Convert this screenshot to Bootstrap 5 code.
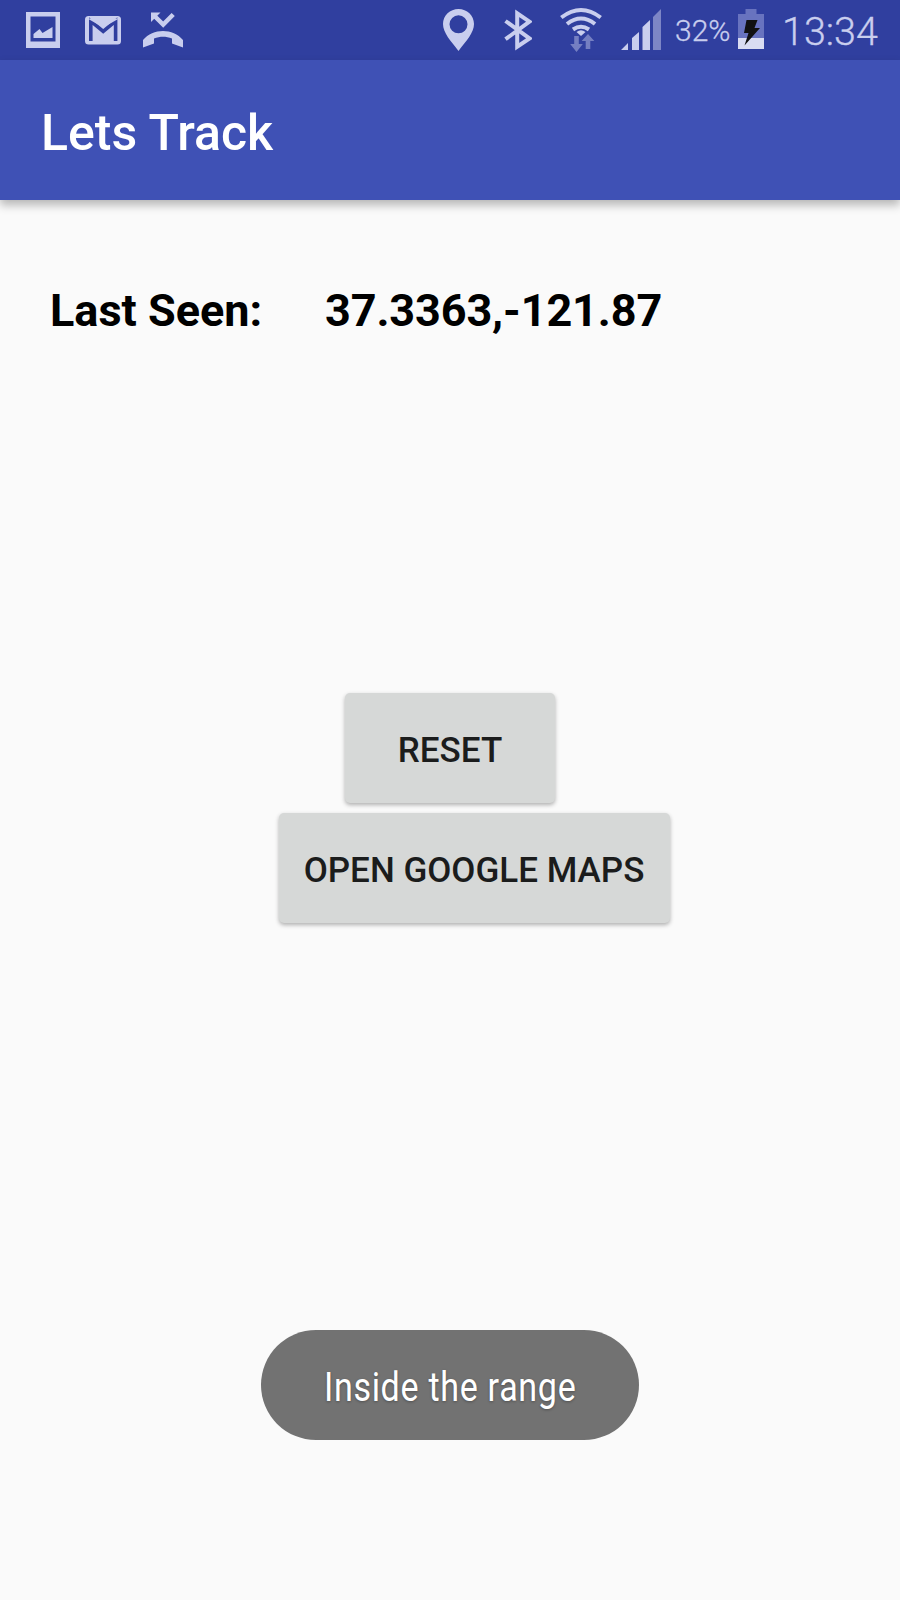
<!DOCTYPE html>
<html lang="en">
<head>
<meta charset="utf-8">
<meta name="viewport" content="width=device-width, initial-scale=1">
<title>Lets Track</title>
<link href="https://cdn.jsdelivr.net/npm/bootstrap@5.3.0/dist/css/bootstrap.min.css" rel="stylesheet">
<style>
body { font-family: Roboto, "Liberation Sans", sans-serif; background: #fafafa; color: #000; }
.screen { width: 900px; height: 1600px; overflow: hidden; }
.status { height: 60px; background: #303f9f; color: #c9ceee; font-weight: 300; line-height: 60px; white-space: nowrap; -webkit-text-stroke: .3px #c9ceee; }
.status svg { height: 60px; fill: #c9ceee; flex: none; }
.status-left { padding-left: 26px; }
.pct { font-size: 30px; width: 55px; margin-left: 14px; line-height: 62px; }
.clock { font-size: 39.5px; width: 94px; margin: 0 24px 0 18px; line-height: 64px; }
.appbar { height: 140px; padding: 5px 41px 0; background: #3f51b5; box-shadow: 0 5px 9px rgba(0,0,0,.28); z-index: 1; }
.appbar .navbar-brand { font-size: 50px; font-weight: 500; line-height: 1; color: #fff; }
.seen { padding: 284px 0 0 50px; margin-top: -200px; font-size: 45px; font-weight: 700; line-height: 53px; }
.seen dt { width: 275px; font-weight: 700; }
.seen dd { font-weight: 700; letter-spacing: -.12px; }
.key { height: 110px; background: #d6d8d7; border: 0; border-radius: 5px; color: #1b1c1c; font-size: 35px; font-weight: 500; line-height: 1; padding: 5px 0 0; box-shadow: 0 2px 4px rgba(0,0,0,.3); white-space: nowrap; }
.actions { margin-top: 356px; gap: 10px; }
.reset { width: 210px; margin-left: 345px; }
.maps { width: 391px; margin-left: 278.5px; }
.msg { width: 378px; height: 110px; margin-top: 407px; border-radius: 55px; background: #727272; color: #fff; font-size: 40px; line-height: 1; padding: 6px 0 0 1px; text-shadow: 0 1px 3px rgba(0,0,0,.3); }
.msg span { display: inline-block; white-space: nowrap; letter-spacing: .8px; transform: scaleX(.852); }
</style>
</head>
<body>
<div class="screen d-flex flex-column">
  <header class="status d-flex justify-content-between">
    <div class="status-left d-flex">
      <svg width="34" viewBox="26 0 34 60"><path fill-rule="evenodd" d="M26 12h34v36H26zM30.500 16.500v25h25v-25z"/><path d="M33.500 38v-4l6-5 3 4 10-6v11z"/></svg>
      <svg width="36" viewBox="85 0 36 60" style="margin-left:25px"><rect x="85" y="16" width="36" height="28.500" rx="3.500"/><path d="M90.800 41V21L103.200 31.300 115.600 21V41" fill="none" stroke="#303f9f" stroke-width="3.600"/><path d="M87.500 18.500h31.500L103.200 27.500z"/></svg>
      <svg width="40" viewBox="143 0 40 60" style="margin-left:22px"><path d="M143 47.500V40C153 28 173 28 183 40v7.500l-11-4v-5c-6-2.500-12-2.500-18 0v5z"/><path d="M154.500 16l8.700 8.500 10-10" fill="none" stroke="#c9ceee" stroke-width="4.500"/><path d="M151 12.500h9.500L151 22z"/></svg>
    </div>
    <div class="d-flex">
      <svg width="31" viewBox="443 0 31 60"><path fill-rule="evenodd" d="M458.500 9C450 9 443 15.500 443 24c0 9 8 17 15.500 27C466 41 474 33 474 24c0-8.500-7-15-15.500-15zm0 6.300a9 9 0 1 1 0 18 9 9 0 0 1 0-18z"/></svg>
      <svg width="28" viewBox="504 0 28 60" style="margin-left:30px"><path d="M505.500 21l24 17.500-12.300 8.200V13.300l12.300 8.400-24 17.500" fill="none" stroke="#c9ceee" stroke-width="4"/></svg>
      <svg width="42" viewBox="560 0 42 60" style="margin-left:28px"><g fill="none" stroke="#c9ceee" stroke-width="4"><path d="M561.300 17.500Q581 2.500 600.700 17.500"/><path d="M567 24Q581 13 595 24"/><path d="M573 29.500Q581 24 589 29.500"/></g><path d="M576.500 32Q581 28.500 585.500 32L581 36z"/><path opacity=".45" d="M574.200 36h4.600v8h4L576.500 52l-6.300-8h4zM585.700 49h4.600v-8h4L588 34l-6.300 7h4z"/></svg>
      <svg width="40" viewBox="621 0 40 60" style="margin-left:19px"><path d="M621 50l7-7v7zM632 50V38l7-6v18zM642.500 50V27l7.500-7v30z"/><path opacity=".5" d="M653 50V17l8-8v41z"/></svg>
      <span class="pct">32%</span>
      <svg width="26" viewBox="738.500 0 26 60" style="margin-left:8px"><path fill="#6873bf" d="M738.500 14h7.500V9h11v5h7.500v24h-26z"/><path fill="#d9dcf2" d="M738.500 38h26v11h-26z"/><path fill="#111" d="M747 20h11l-3 8h5.500L745 45.500l4-12.500h-4.500z"/></svg>
      <span class="clock">13:34</span>
    </div>
  </header>
  <nav class="navbar appbar position-relative"><span class="navbar-brand m-0">Lets Track</span></nav>
  <main class="d-flex flex-column flex-grow-1">
    <dl class="seen d-flex mb-0"><dt>Last Seen:</dt><dd class="mb-0">37.3363,-121.87</dd></dl>
    <div class="actions d-flex flex-column align-items-start">
      <button class="btn key reset" type="button">RESET</button>
      <button class="btn key maps" type="button">OPEN GOOGLE MAPS</button>
    </div>
    <div class="msg d-flex align-items-center justify-content-center mx-auto" role="status"><span>Inside the range</span></div>
  </main>
</div>
<script src="https://cdn.jsdelivr.net/npm/bootstrap@5.3.0/dist/js/bootstrap.bundle.min.js"></script>
</body>
</html>
